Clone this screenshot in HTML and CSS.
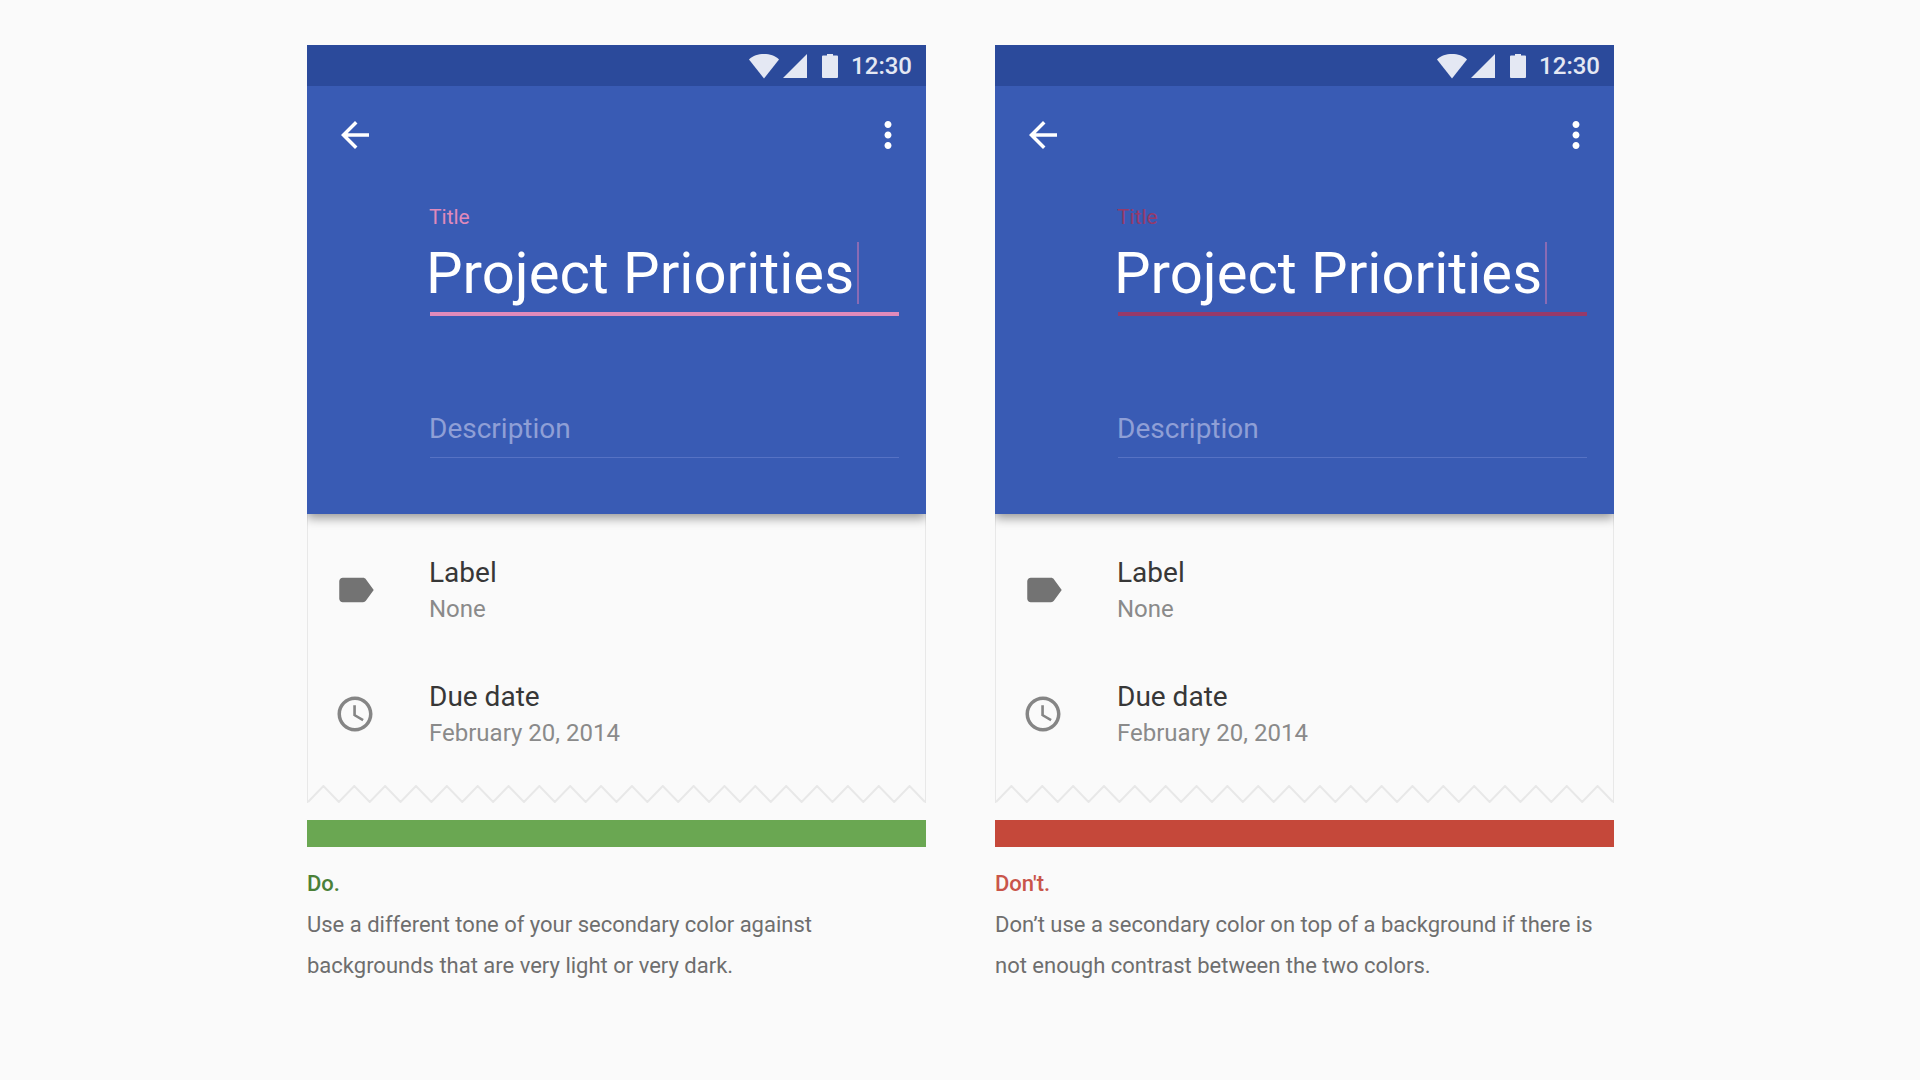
FILE: index.html
```html
<!DOCTYPE html>
<html lang="en">
<head>
<meta charset="utf-8">
<meta name="viewport" content="width=device-width, initial-scale=1">
<title>Secondary color</title>
<link rel="stylesheet" href="styles.css">
</head>
<body>
<svg class="sprite" aria-hidden="true">
  <symbol id="wifi" viewBox="0 0 32 26"><path d="M1 6.500C5 2.500 10 1 16 1s11 1.500 15 5.500L16 25.500z"/></symbol>
  <symbol id="signal" viewBox="0 0 26 26"><path d="M25 1v24H1z"/></symbol>
  <symbol id="battery" viewBox="0 0 18 26"><path d="M6 1h6v1.500h4q1 0 1 1V24q0 1-1 1H2q-1 0-1-1V3.500q0-1 1-1h4z"/></symbol>
  <symbol id="back" viewBox="0 0 24 24"><path d="M20 11H7.830l5.590-5.590L12 4l-8 8 8 8 1.410-1.410L7.830 13H20z"/></symbol>
  <symbol id="more" viewBox="0 0 24 24"><path d="M12 8c1.100 0 2-.9 2-2s-.9-2-2-2-2 .9-2 2 .9 2 2 2zm0 2c-1.100 0-2 .9-2 2s.9 2 2 2 2-.9 2-2-.9-2-2-2zm0 6c-1.100 0-2 .9-2 2s.9 2 2 2 2-.9 2-2-.9-2-2-2z"/></symbol>
  <symbol id="label" viewBox="0 0 24 24"><path d="M18.200 5.840C17.840 5.330 17.250 5 16.580 5L5 5.010C3.900 5.010 3 5.900 3 7v10c0 1.100.9 1.990 2 1.990L16.580 19c.67 0 1.260-.33 1.620-.84L22.700 12z"/></symbol>
  <symbol id="clock" viewBox="0 0 24 24"><path d="M11.990 2C6.470 2 2 6.480 2 12s4.470 10 9.990 10C17.520 22 22 17.520 22 12S17.520 2 11.990 2zM12 20c-4.420 0-8-3.580-8-8s3.580-8 8-8 8 3.580 8 8-3.580 8-8 8zm.5-13H11v6l5.250 3.150.75-1.230-4.500-2.670z"/></symbol>
  <symbol id="tear" viewBox="0 0 620 18" preserveAspectRatio="none"><path d="M0 17L15.500 1 31 17 46.500 1 62 17 77.500 1 93 17 108.500 1 124 17 139.500 1 155 17 170.500 1 186 17 201.500 1 217 17 232.500 1 248 17 263.500 1 279 17 294.500 1 310 17 325.500 1 341 17 356.500 1 372 17 387.500 1 403 17 418.500 1 434 17 449.500 1 465 17 480.500 1 496 17 511.500 1 527 17 542.500 1 558 17 573.500 1 589 17 604.500 1 620 17"/></symbol>
</svg>

<main class="comparison">
  <figure class="example example--do">
    <div class="screen">
      <header class="screen__header">
        <div class="status">
          <svg class="status__wifi"><use href="#wifi"/></svg>
          <svg class="status__signal"><use href="#signal"/></svg>
          <svg class="status__battery"><use href="#battery"/></svg>
          <span class="status__time">12:30</span>
        </div>
        <div class="toolbar">
          <button class="icon-button" type="button" aria-label="Back"><svg class="icon"><use href="#back"/></svg></button>
          <button class="icon-button" type="button" aria-label="More options"><svg class="icon"><use href="#more"/></svg></button>
        </div>
        <form class="form">
          <label class="form__label" for="do-title">Title</label>
          <div class="form__row">
            <input class="form__title" id="do-title" type="text" value="Project Priorities">
            <span class="form__caret"></span>
          </div>
          <div class="form__line form__line--active"></div>
          <input class="form__description" type="text" placeholder="Description" aria-label="Description">
          <div class="form__line"></div>
        </form>
      </header>
      <div class="details">
        <div class="detail">
          <svg class="icon icon--label"><use href="#label"/></svg>
          <div class="detail__text">
            <div class="detail__name">Label</div>
            <div class="detail__value">None</div>
          </div>
        </div>
        <div class="detail">
          <svg class="icon icon--clock"><use href="#clock"/></svg>
          <div class="detail__text">
            <div class="detail__name">Due date</div>
            <div class="detail__value">February 20, 2014</div>
          </div>
        </div>
      </div>
      <svg class="tear"><use href="#tear"/></svg>
    </div>
    <div class="example__bar"></div>
    <figcaption class="caption">
      <h2 class="caption__title">Do.</h2>
      <p class="caption__text">Use a different tone of your secondary color against backgrounds that are very light or very dark.</p>
    </figcaption>
  </figure>

  <figure class="example example--dont">
    <div class="screen">
      <header class="screen__header">
        <div class="status">
          <svg class="status__wifi"><use href="#wifi"/></svg>
          <svg class="status__signal"><use href="#signal"/></svg>
          <svg class="status__battery"><use href="#battery"/></svg>
          <span class="status__time">12:30</span>
        </div>
        <div class="toolbar">
          <button class="icon-button" type="button" aria-label="Back"><svg class="icon"><use href="#back"/></svg></button>
          <button class="icon-button" type="button" aria-label="More options"><svg class="icon"><use href="#more"/></svg></button>
        </div>
        <form class="form">
          <label class="form__label" for="dont-title">Title</label>
          <div class="form__row">
            <input class="form__title" id="dont-title" type="text" value="Project Priorities">
            <span class="form__caret"></span>
          </div>
          <div class="form__line form__line--active"></div>
          <input class="form__description" type="text" placeholder="Description" aria-label="Description">
          <div class="form__line"></div>
        </form>
      </header>
      <div class="details">
        <div class="detail">
          <svg class="icon icon--label"><use href="#label"/></svg>
          <div class="detail__text">
            <div class="detail__name">Label</div>
            <div class="detail__value">None</div>
          </div>
        </div>
        <div class="detail">
          <svg class="icon icon--clock"><use href="#clock"/></svg>
          <div class="detail__text">
            <div class="detail__name">Due date</div>
            <div class="detail__value">February 20, 2014</div>
          </div>
        </div>
      </div>
      <svg class="tear"><use href="#tear"/></svg>
    </div>
    <div class="example__bar"></div>
    <figcaption class="caption">
      <h2 class="caption__title">Don't.</h2>
      <p class="caption__text">Don’t use a secondary color on top of a background if there is not enough contrast between the two colors.</p>
    </figcaption>
  </figure>
</main>
</body>
</html>
```

FILE: styles.css
```css
* {
  box-sizing: border-box;
}

body {
  margin: 0;
  background: #fafafa;
  color: #6e6e6e;
  font-family: Roboto, sans-serif;
}

.sprite {
  display: none;
}

.comparison {
  display: grid;
  grid-template-columns: repeat(2, minmax(0, 1fr));
  gap: 69px;
  padding: 45px 306px 45px 307px;
}

.example {
  margin: 0;
}

.example--do {
  --accent: #e08abb;
  --verdict: #6aa752;
  --verdict-text: #4a8038;
}

.example--dont {
  --accent: #963a6a;
  --verdict: #c5483a;
  --verdict-text: #c9554a;
}

.example__bar {
  height: 27px;
  margin-top: 17px;
  background: var(--verdict);
}

.screen {
  overflow: hidden;
}

.screen__header {
  position: relative;
  padding-bottom: 56px;
  background: #395bb4;
  box-shadow: 0 4px 10px rgba(0, 0, 0, 0.4);
  color: #fff;
}

.status {
  display: flex;
  align-items: center;
  height: 41px;
  padding-right: 14px;
  justify-content: flex-end;
  background: #2b4a9b;
  color: #e4e8f3;
  fill: currentColor;
}

.status__wifi {
  width: 32px;
  height: 26px;
  margin-right: 2px;
}

.status__signal {
  width: 26px;
  height: 26px;
  margin-right: 13px;
}

.status__battery {
  width: 18px;
  height: 26px;
  margin-right: 12px;
}

.status__time {
  font-size: 24px;
  font-weight: 500;
  line-height: 30px;
}

.toolbar {
  display: flex;
  justify-content: space-between;
  padding: 28px 17px 0 27px;
}

.icon-button {
  padding: 0;
  border: 0;
  background: none;
  color: #fff;
}

.icon {
  display: block;
  flex: none;
  width: 42px;
  height: 42px;
  fill: currentColor;
}

.icon--label {
  color: #737373;
}

.icon--clock {
  color: #858585;
}

.form {
  display: flex;
  flex-direction: column;
  margin-top: 49px;
  padding: 0 27px 0 119px;
}

.form__label {
  padding-left: 3px;
  color: var(--accent);
  font-size: 21px;
  line-height: 24px;
}

.form__row {
  display: flex;
  align-items: center;
  margin: 9px 0 4px;
}

.form__title,
.form__description {
  min-width: 0;
  padding: 0;
  border: 0;
  outline: 0;
  background: none;
  color: #fff;
  font-family: inherit;
}

.form__title {
  width: 431px;
  height: 70px;
  font-size: 58px;
}

.form__caret {
  width: 2px;
  height: 62px;
  background: #8a6bb4;
}

.form__line {
  height: 1px;
  margin-left: 4px;
  background: #5672c4;
}

.form__line--active {
  height: 4px;
  background: var(--accent);
}

.form__description {
  height: 34px;
  margin: 95px 0 12px;
  padding-left: 3px;
  font-size: 28px;
}

.form__description::placeholder {
  color: #8f9fd6;
  opacity: 1;
}

.details {
  display: grid;
  gap: 56px;
  padding: 42px 26px 37px;
  border: solid #e8e8e8;
  border-width: 0 1px;
}

.detail {
  display: flex;
  align-items: center;
  gap: 53px;
}

.detail__text {
  display: grid;
  gap: 4px;
}

.detail__name {
  color: #373737;
  font-size: 28px;
  line-height: 34px;
}

.detail__value {
  color: #8a8a8a;
  font-size: 24px;
  line-height: 30px;
}

.tear {
  display: block;
  width: 100%;
  height: 18px;
  border: solid #e8e8e8;
  border-width: 0 1px;
  fill: none;
  stroke: #e8e8e8;
  stroke-width: 2px;
}

.caption {
  padding-top: 16px;
  font-size: 22px;
  line-height: 41px;
}

.caption__title {
  margin: 0;
  color: var(--verdict-text);
  font-size: inherit;
  font-weight: 500;
}

.caption__text {
  margin: 0;
}
```
